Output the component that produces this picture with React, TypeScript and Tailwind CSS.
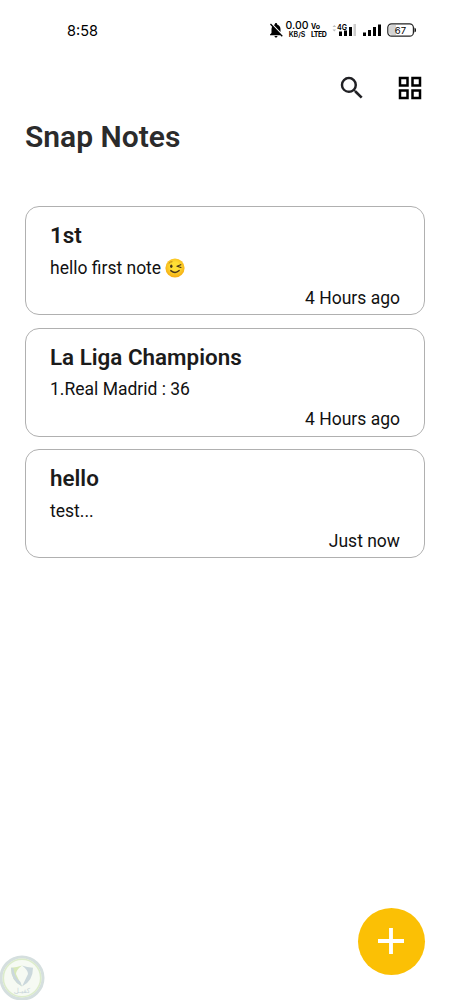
import React from 'react';
import { MdNotificationsOff, MdOutlineGridView, MdSearch } from 'react-icons/md';

interface Note {
  title: string;
  body: string;
  wink?: boolean;
  time: string;
}

const notes: Note[] = [
  { title: '1st', body: 'hello first note', wink: true, time: '4 Hours ago' },
  { title: 'La Liga Champions', body: '1.Real Madrid : 36', time: '4 Hours ago' },
  { title: 'hello', body: 'test...', time: 'Just now' },
];

function Wink() {
  return (
    <svg viewBox="0 0 20 20" className="ml-[4px] h-5 w-5">
      <defs>
        <radialGradient id="face" cx="50%" cy="42%" r="55%">
          <stop offset="0.4" stopColor="#ffdf35" />
          <stop offset="1" stopColor="#f6b015" />
        </radialGradient>
      </defs>
      <circle cx="10" cy="10" r="9.6" fill="url(#face)" />
      <ellipse cx="6.3" cy="8.2" rx="1.2" ry="1.7" fill="#47341a" />
      <path d="M4 5.2q1.2-1.6 3-1.5" fill="none" stroke="#a87510" strokeWidth="0.8" strokeLinecap="round" />
      <path d="M15.8 6.7 12 8.2l3.9 1.3" fill="none" stroke="#47341a" strokeWidth="1.2" strokeLinecap="round" strokeLinejoin="round" />
      <path d="M5.8 12.6q4.3 3.7 8.4 0" fill="none" stroke="#47341a" strokeWidth="1.4" strokeLinecap="round" />
    </svg>
  );
}

function StatusBar() {
  return (
    <div className="flex h-[60px] items-center justify-between pr-[34px] pl-[67px] font-['Inter',sans-serif] text-black">
      <span className="pt-[2px] text-[14.5px] leading-5">8:58</span>
      <div className="flex items-center">
        <MdNotificationsOff className="h-[18px] w-[18px]" />
        <div className="flex w-[24px] flex-col items-center font-medium">
          <span className="text-[10.5px] leading-[10px]">0.00</span>
          <span className="text-[7px] leading-[8px] font-semibold">KB/S</span>
        </div>
        <div className="ml-[2px] flex w-[17px] flex-col pt-[1px] font-bold">
          <span className="text-[7px] leading-[8px]">Vo</span>
          <span className="text-[7px] leading-[7px] tracking-[-0.5px]">LTED</span>
        </div>
        <svg viewBox="0 0 24 16" className="ml-[4px] h-4 w-6">
          <path d="m0.5 5 1.8-2 1.8 2zm0 2.5 1.8 2 1.8-2z" fill="#bbb" />
          <text x="5" y="7.6" fontSize="8" fontWeight="600" textLength="10" lengthAdjust="spacingAndGlyphs">4G</text>
          <path d="M7 9.5h3V14H7zM12 8.5h3V14h-3zM17 5h3v9h-3z" />
          <path d="M21.5 2H24v12h-2.5z" fill="#ccc" />
        </svg>
        <svg viewBox="0 0 19 16" className="ml-[6px] h-4 w-[19px]">
          <path d="M1 10.5h3V14H1zM6 8h3v6H6zM11 5h3v9h-3zM16 2.5h3V14h-3z" />
        </svg>
        <svg viewBox="0 0 30 14" className="-mr-[1px] ml-[6px] h-[14px] w-[30px]">
          <path d="M5 2h4v10H5q-3 0-3-3V5q0-3 3-3z" fill="#d4d4d4" />
          <rect x="0.8" y="0.8" width="25.6" height="12.4" rx="3.8" fill="none" stroke="#222" strokeWidth="1.2" />
          <path d="M27.5 4.5v5q1.5-.5 1.5-2.5t-1.5-2.5z" />
          <text x="13.5" y="10.5" fontSize="9.5" textAnchor="middle" textLength="11.5">67</text>
        </svg>
      </div>
    </div>
  );
}

function NoteCard({ note }: { note: Note }) {
  return (
    <div className="h-[109px] rounded-[14px] border border-[#b0b0b0] px-6 pt-[14px]">
      <h2 className="text-[22.4px] leading-7 font-semibold text-[#1b1b1b]">{note.title}</h2>
      <div className="mt-[5.5px] flex h-[26px] items-center text-[17.5px] leading-[26px]">
        {note.body}
        {note.wink && <Wink />}
      </div>
      <div className="mt-[4px] text-right text-[17.5px] leading-[26px]">{note.time}</div>
    </div>
  );
}

function Watermark() {
  return (
    <svg viewBox="0 0 46 46" className="h-[46px] w-[46px]">
      <circle cx="22" cy="24" r="21" fill="#f6faf3" stroke="#d5dfdf" strokeWidth="3" />
      <circle cx="22" cy="24" r="18.7" fill="none" stroke="#dceccb" strokeWidth="1.6" />
      <path d="M22 11.5q-5 2-11 2.3 0 13.5 11 18.7L16 20q0-4 6-8.5z" fill="#d8e9b8" />
      <path d="M22 11.5q5 2 11 2.3 0 13.5-11 18.7L28 20q0-4-6-8.5z" fill="#cbd8dc" />
      <path d="M11 13.8q0 13.5 11 18.7l-1.5-4.5Q14 23 13.5 14z" fill="#cbd8dc" />
      <text x="22" y="38.5" fontSize="7" textAnchor="middle" fill="#cbd8dc" fontFamily="DejaVu Sans">كفيـل</text>
    </svg>
  );
}

export default function App() {
  return (
    <div className="flex h-[1000px] w-[450px] flex-col bg-white font-['Roboto',sans-serif] text-[#111]">
      <StatusBar />
      <header className="px-[25px] pt-[13px]">
        <div className="flex justify-end gap-[28px] text-[#202024]">
          <MdSearch className="h-[30px] w-[30px]" />
          <MdOutlineGridView className="h-[30px] w-[30px] text-black" />
        </div>
        <h1 className="mt-[16px] text-[30px] leading-9 font-semibold text-[#2b2b2b]">Snap Notes</h1>
      </header>
      <main className="mt-[51px] flex flex-col gap-[12.5px] px-[25px]">
        {notes.map((note) => (
          <NoteCard key={note.title} note={note} />
        ))}
      </main>
      <footer className="mt-auto flex items-end justify-between pr-[25px]">
        <Watermark />
        <button className="mb-[25px] flex h-[67px] w-[67px] items-center justify-center rounded-full bg-[#fbc005]">
          <svg viewBox="0 0 27 27" className="mr-px mb-px h-[26px] w-[26px]">
            <path d="M13.5 0v27M0 13.5h27" stroke="#fff" strokeWidth="4" />
          </svg>
        </button>
      </footer>
    </div>
  );
}
